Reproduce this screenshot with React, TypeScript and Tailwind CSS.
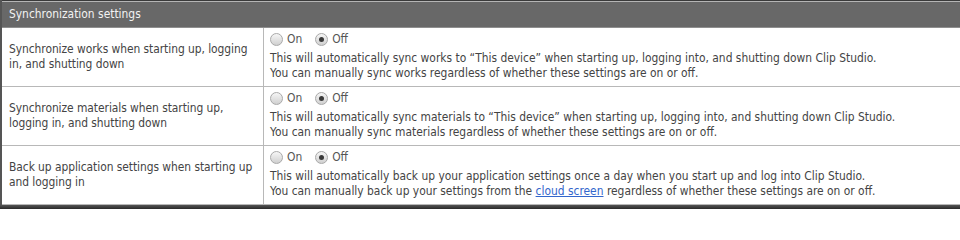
import React from "react";

type Row = {
  label: string;
  lines: React.ReactNode[];
};

const rows: Row[] = [
  {
    label: "Synchronize works when starting up, logging in, and shutting down",
    lines: [
      "This will automatically sync works to \u201cThis device\u201d when starting up, logging into, and shutting down Clip Studio.",
      "You can manually sync works regardless of whether these settings are on or off.",
    ],
  },
  {
    label: "Synchronize materials when starting up, logging in, and shutting down",
    lines: [
      "This will automatically sync materials to \u201cThis device\u201d when starting up, logging into, and shutting down Clip Studio.",
      "You can manually sync materials regardless of whether these settings are on or off.",
    ],
  },
  {
    label: "Back up application settings when starting up and logging in",
    lines: [
      "This will automatically back up your application settings once a day when you start up and log into Clip Studio.",
      <>
        You can manually back up your settings from the{" "}
        <a href="#" className="text-[#3366cc] underline">cloud screen</a> regardless of whether these
        settings are on or off.
      </>,
    ],
  },
];

function Radio({ checked, label }: { checked?: boolean; label: string }) {
  return (
    <span className="flex items-center gap-[4px]">
      <span className="flex h-[13px] w-[13px] items-center justify-center rounded-full border border-[#a9a9a9] bg-gradient-to-b from-[#f6f6f6] to-[#d0d0d0]">
        {checked && <span className="h-[5px] w-[5px] rounded-full bg-[#3a3a3a]" />}
      </span>
      <span>{label}</span>
    </span>
  );
}

export default function App() {
  return (
    <div
      className="w-[960px] h-[209px] overflow-hidden bg-white text-[11.9px] leading-[15px] text-[#444]"
      style={{ fontFamily: '"DejaVu Sans Condensed", "DejaVu Sans", sans-serif' }}
    >
      <div className="border-l-2 border-[#555]">
        {/* Header */}
        <div className="h-[28px] border-t border-t-[#3a3a3a] bg-[#686868] flex flex-col">
          <div className="h-[1px] bg-[#b5b5b5]" />
          <div className="flex-1 flex items-center pl-[7px] text-[#f2f2f2]">
            Synchronization settings
          </div>
          <div className="h-[1px] bg-[#8f8f8f]" />
        </div>

        {/* Rows */}
        {rows.map((row, i) => (
          <div key={i} className="grid grid-cols-[262px_1fr] border-b border-[#b8b8b8]">
            <div className="flex items-center pl-[7px] border-r border-[#b8b8b8] tracking-[-0.05px]">
              {row.label}
            </div>
            <div className="pl-[6px] pt-[4px] pb-[5px]">
              <div className="flex items-center gap-[13px] h-[15px] mb-[4px] text-[#555]">
                <Radio label="On" />
                <Radio label="Off" checked />
              </div>
              {row.lines.map((l, j) => (
                <div key={j}>{l}</div>
              ))}
            </div>
          </div>
        ))}
      </div>
      <div className="h-[4px] bg-gradient-to-b from-[#555] to-[#2a2a2a]" />
    </div>
  );
}
